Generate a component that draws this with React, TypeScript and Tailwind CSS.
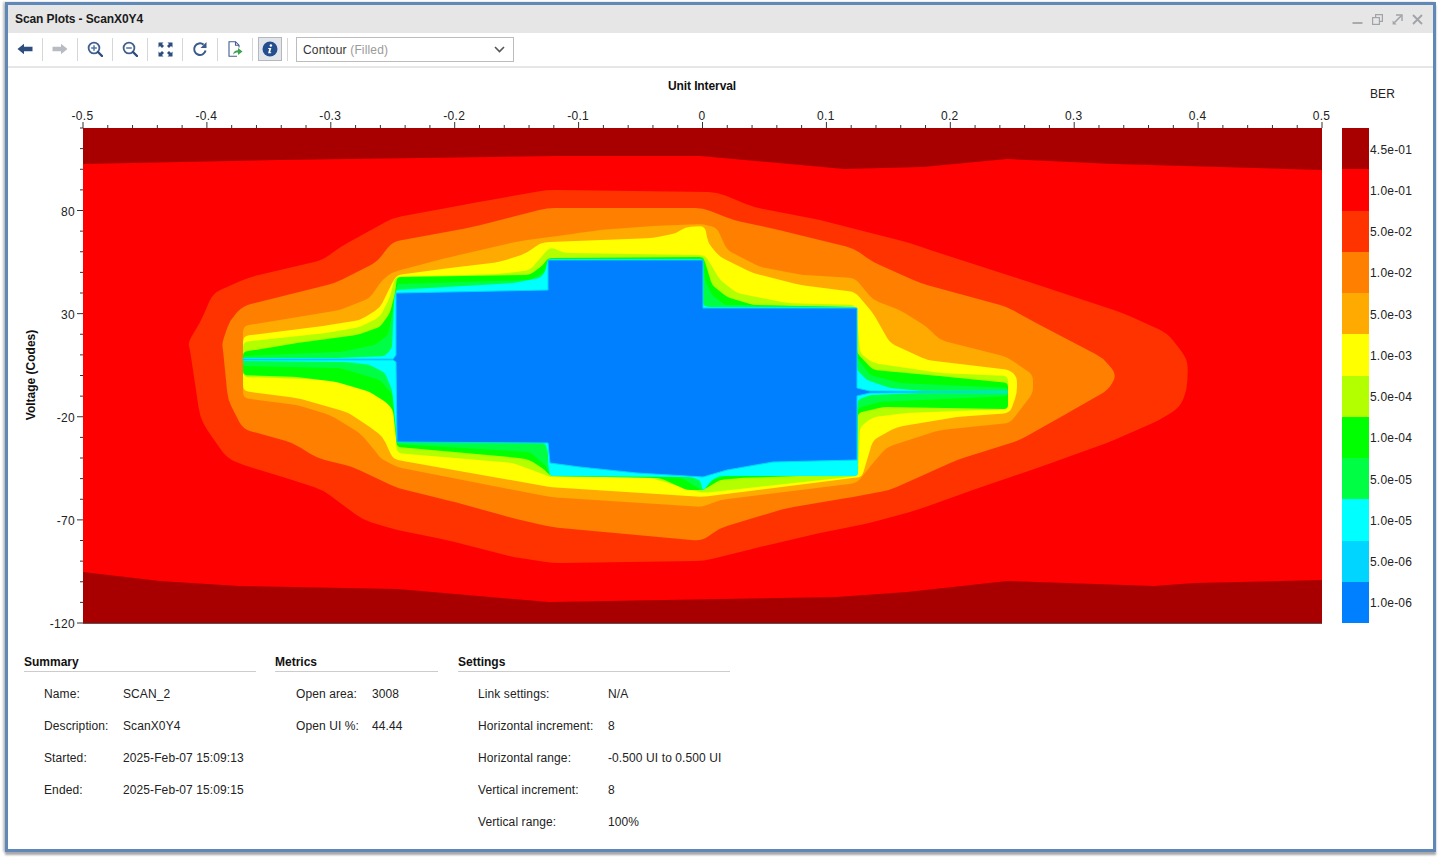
const layers = [
  {
    color: "#ff0000",
    radius: 0,
    points:
      "83,164 279,160 557,156 700,156 844,169 923,167 1007,159 1114,164 1322,170 1322,580 1194,583 1154,586 1007,581 907,592 836,597 549,602 398,589 239,586 160,581 83,572",
  },
  {
    color: "#ff3300",
    radius: 9,
    points:
      "188,342 200,323 213,293 250,277 323,260 340,247 393,218 473,203 547,190 717,192 753,207 820,220 910,243 930,250 1023,280 1123,313 1167,333 1183,353 1188,363 1187,390 1180,407 1160,420 1107,443 1040,467 973,490 917,510 870,523 820,533 760,547 704,561 553,563 513,557 447,540 397,530 363,520 323,490 283,477 243,465 227,458 207,430 200,417 190,350",
  },
  {
    color: "#ff8000",
    radius: 8,
    points:
      "222,343 230,320 243,306 335,283 377,262 392,242 473,227 547,208 703,208 733,220 770,228 853,248 873,262 920,283 1007,307 1040,325 1103,358 1117,375 1108,390 1073,410 1020,440 957,460 890,490 853,497 787,508 720,528 702,541 550,527 513,518 447,500 397,488 353,467 317,458 293,443 243,429 228,400 223,350",
  },
  {
    color: "#ffaa00",
    radius: 6,
    points:
      "243,326 340,310 370,298 382,280 393,272 450,257 520,241 550,237 580,233 600,230 653,226 703,224 717,228 727,250 760,267 803,275 855,278 873,300 900,310 927,327 940,340 1007,357 1033,375 1033,393 1010,423 940,430 887,447 873,463 857,483 720,500 702,507 550,497 397,467 380,458 377,453 360,433 330,415 297,405 243,398",
  },
  {
    color: "#ffff00",
    radius: 6,
    points:
      "243,336 323,326 360,320 380,308 392,283 397,275 450,268 500,262 527,253 540,243 550,242 653,238 677,233 685,227 705,226 708,243 720,257 753,273 800,285 855,292 873,313 890,343 927,360 1010,370 1017,377 1017,393 1010,413 957,417 897,427 873,440 862,477 853,478 702,497 550,487 397,460 392,457 383,437 370,427 347,412 297,398 243,391",
  },
  {
    color: "#b3ff00",
    radius: 5,
    points:
      "243,342 327,333 360,327 380,317 390,297 395,277 500,274 530,270 543,255 550,247 565,253 703,255 707,258 720,280 737,293 787,303 855,305 857,317 860,353 873,363 940,373 1008,376 1008,409 907,413 873,417 860,427 858,476 703,493 647,477 550,477 540,473 513,463 397,453 393,407 377,392 333,380 243,377",
  },
  {
    color: "#00ff00",
    radius: 4,
    points:
      "243,352 297,343 357,335 380,327 390,313 395,293 397,277 530,275 543,265 548,258 703,257 705,262 712,285 727,297 753,305 855,307 857,353 873,370 940,376 1008,383 1008,409 883,407 858,413 857,474 740,478 720,480 703,490 687,490 660,478 550,476 545,470 530,460 520,458 397,447 393,410 387,403 370,392 337,382 297,377 243,375",
  },
  {
    color: "#00ff44",
    radius: 3,
    points:
      "243,356 340,352 375,345 388,335 393,310 396,293 397,284 530,280 545,272 548,259 703,259 705,280 712,295 725,305 855,307 857,358 870,375 900,383 1008,388 1008,396 880,402 858,408 857,475 725,476 712,480 703,491 695,486 680,477 550,476 546,466 530,452 397,444 393,395 380,380 340,368 243,366",
  },
  {
    color: "#00ffff",
    radius: 3,
    points:
      "243,358 340,358 385,356 392,348 394,300 396,290 513,283 540,278 545,272 548,259 703,259 703,305 708,307 857,307 857,370 867,380 890,388 923,391 1008,391 1008,393 923,393 870,395 858,400 857,410 858,476 720,476 712,480 703,491 700,480 690,477 550,476 548,463 548,452 545,443 397,441 394,410 392,390 385,373 370,365 347,362 243,361",
  },
];

const bluePoints =
  "243,359 393,359 396,355 396,293 548,290 548,260 703,260 703,308 857,308 857,388 870,391 1008,392 870,393 857,396 857,460 773,462 727,470 703,477 637,473 580,467 550,463 548,443 397,442 396,362 393,360 243,360";

// polygon with its corners rounded, the contours of the plot are soft
function roundedPath(points: string, radius: number) {
  const pts = points.split(" ").map((p) => p.split(",").map(Number));
  if (radius === 0) return "M" + pts.map((p) => p.join(" ")).join("L") + "Z";
  let d = "";
  pts.forEach((p, i) => {
    const prev = pts[(i + pts.length - 1) % pts.length];
    const next = pts[(i + 1) % pts.length];
    const lenA = Math.hypot(prev[0] - p[0], prev[1] - p[1]);
    const lenB = Math.hypot(next[0] - p[0], next[1] - p[1]);
    const a = Math.min(radius, lenA / 2) / lenA;
    const b = Math.min(radius, lenB / 2) / lenB;
    const start = [p[0] + (prev[0] - p[0]) * a, p[1] + (prev[1] - p[1]) * a];
    const end = [p[0] + (next[0] - p[0]) * b, p[1] + (next[1] - p[1]) * b];
    d += `${i === 0 ? "M" : "L"}${start[0]} ${start[1]}Q${p[0]} ${p[1]} ${end[0]} ${end[1]}`;
  });
  return d + "Z";
}

const legend = [
  { color: "#a80000", label: "4.5e-01" },
  { color: "#ff0000", label: "1.0e-01" },
  { color: "#ff3300", label: "5.0e-02" },
  { color: "#ff8000", label: "1.0e-02" },
  { color: "#ffaa00", label: "5.0e-03" },
  { color: "#ffff00", label: "1.0e-03" },
  { color: "#b3ff00", label: "5.0e-04" },
  { color: "#00ff00", label: "1.0e-04" },
  { color: "#00ff44", label: "5.0e-05" },
  { color: "#00ffff", label: "1.0e-05" },
  { color: "#00d5ff", label: "5.0e-06" },
  { color: "#0080ff", label: "1.0e-06" },
];

const xLabels = ["-0.5", "-0.4", "-0.3", "-0.2", "-0.1", "0", "0.1", "0.2", "0.3", "0.4", "0.5"];
const yLabels = ["80", "30", "-20", "-70", "-120"];

const sections = [
  {
    title: "Summary",
    box: "w-[232px]",
    rowPad: "pl-[20px]",
    labelWidth: "w-[79px]",
    rows: [
      ["Name:", "SCAN_2"],
      ["Description:", "ScanX0Y4"],
      ["Started:", "2025-Feb-07 15:09:13"],
      ["Ended:", "2025-Feb-07 15:09:15"],
    ],
  },
  {
    title: "Metrics",
    box: "w-[163px]",
    rowPad: "pl-[21px]",
    labelWidth: "w-[76px]",
    rows: [
      ["Open area:", "3008"],
      ["Open UI %:", "44.44"],
    ],
  },
  {
    title: "Settings",
    box: "ml-[1px] w-[272px]",
    rowPad: "pl-[20px]",
    labelWidth: "w-[130px]",
    rows: [
      ["Link settings:", "N/A"],
      ["Horizontal increment:", "8"],
      ["Horizontal range:", "-0.500 UI to 0.500 UI"],
      ["Vertical increment:", "8"],
      ["Vertical range:", "100%"],
    ],
  },
];

function ContourChart() {
  const xTicks = Array.from({ length: 51 }, (_, i) => i);
  const yTicks = Array.from({ length: 25 }, (_, i) => i);
  return (
    <svg width="1322" height="572" viewBox="8 68 1322 572" className="shrink-0">
      <text x="702" y="90" textAnchor="middle" fontSize="12" fontWeight="700" letterSpacing="-0.1" fill="#111">
        Unit Interval
      </text>
      <text
        x="0"
        y="0"
        transform="translate(35 375) rotate(-90)"
        textAnchor="middle"
        fontSize="12"
        fontWeight="700"
        fill="#111"
      >
        Voltage (Codes)
      </text>

      <rect x="83" y="128" width="1239" height="495" fill="#a80000" />
      {layers.map((layer) => (
        <path key={layer.color} d={roundedPath(layer.points, layer.radius)} fill={layer.color} />
      ))}
      <polygon points={bluePoints} fill="#0080ff" stroke="#00d5ff" strokeWidth="1" />

      {xTicks.map((i) => {
        const x = 83 + i * 24.78;
        return (
          <line key={i} x1={x} x2={x} y1={i % 5 === 0 ? 122 : 125} y2="128" stroke="#333" strokeWidth="1" />
        );
      })}
      {yTicks.map((i) => {
        const y = 623 - i * 20.625;
        return (
          <line key={i} x1={i % 5 === 0 ? 77 : 80} x2="83" y1={y} y2={y} stroke="#333" strokeWidth="1" />
        );
      })}
      <line x1="83" x2="1322" y1="623.5" y2="623.5" stroke="#555" strokeWidth="1" />

      {xLabels.map((label, i) => (
        <text
          key={label}
          x={82.5 + i * 123.9}
          y="120"
          textAnchor="middle"
          fontSize="12"
          letterSpacing="0.3"
          fill="#222"
        >
          {label}
        </text>
      ))}
      {yLabels.map((label, i) => (
        <text key={label} x="75" y={216 + i * 103} textAnchor="end" fontSize="12" letterSpacing="0.3" fill="#222">
          {label}
        </text>
      ))}
    </svg>
  );
}

function Separator() {
  return <div className="h-[23px] w-px shrink-0 bg-[#d6d6d6]" />;
}

function ToolButton({ children }: { children: React.ReactNode }) {
  return <div className="flex h-[24px] w-[34px] shrink-0 items-center justify-center">{children}</div>;
}

function MagnifierIcon({ minus }: { minus?: boolean }) {
  return (
    <svg width="16" height="16" viewBox="0 0 16 16" fill="none">
      <circle cx="7" cy="7" r="5.4" stroke="#3f5f8f" strokeWidth="1.8" />
      <path d="M11 11l4 4" stroke="#2e4d7f" strokeWidth="2.4" strokeLinecap="round" />
      <path d="M4.2 7h5.6" stroke="#5a7aa6" strokeWidth="1.6" />
      {!minus && <path d="M7 4.2v5.6" stroke="#5a7aa6" strokeWidth="1.6" />}
    </svg>
  );
}

export default function App() {
  return (
    <div className="h-[860px] w-[1440px] overflow-hidden bg-white pl-[5px] pt-[2px] font-['Liberation_Sans',Arial,sans-serif] text-[12px] text-[#222]">
      <div className="flex h-[850px] w-[1431px] flex-col border-[3px] border-[#5f87b8] bg-white shadow-[0_3px_2px_#a8a8a8,-2px_0_2px_#c8c8c8]">
        {/* title bar */}
        <div className="flex h-[28px] shrink-0 items-center justify-between bg-[#e6e6e6] pl-[7px] pr-[10px]">
          <span className="text-[12px] font-bold tracking-[-0.1px] text-[#1a1a1a]">Scan Plots - ScanX0Y4</span>
          <div className="flex items-center gap-[9px]">
            <svg width="11" height="11" viewBox="0 0 11 11" fill="none">
              <path d="M0.5 9h10" stroke="#a0a4a8" strokeWidth="1.8" />
            </svg>
            <svg width="11" height="11" viewBox="0 0 11 11" fill="none" stroke="#a0a4a8" strokeWidth="1.2">
              <rect x="0.6" y="3.6" width="6.8" height="6.8" />
              <path d="M3.6 3.4V0.6h6.8v6.8H7.6" />
            </svg>
            <svg width="11" height="11" viewBox="0 0 11 11" fill="none">
              <path d="M4 1h6v6" stroke="#a0a4a8" strokeWidth="1.4" />
              <path d="M0.6 10.4V6.4L4.6 10.4Z" fill="#a0a4a8" />
              <path d="M2.5 8.5L9.8 1.2" stroke="#a0a4a8" strokeWidth="1.6" />
            </svg>
            <svg width="11" height="11" viewBox="0 0 11 11" fill="none">
              <path d="M1 1l9 9M10 1l-9 9" stroke="#a0a4a8" strokeWidth="1.8" />
            </svg>
          </div>
        </div>

        {/* toolbar */}
        <div className="flex h-[35px] shrink-0 items-center border-b-2 border-[#e6e6e6] pb-[1px]">
          <ToolButton>
            <svg width="16" height="12" viewBox="0 0 16 12">
              <path d="M0.5 6L7 0.8V3.8H15.5V8.2H7V11.2Z" fill="#2e4d7f" />
            </svg>
          </ToolButton>
          <Separator />
          <ToolButton>
            <svg width="16" height="12" viewBox="0 0 16 12">
              <path d="M15.5 6L9 0.8V3.8H0.5V8.2H9V11.2Z" fill="#b8bcc2" />
            </svg>
          </ToolButton>
          <Separator />
          <ToolButton>
            <MagnifierIcon />
          </ToolButton>
          <Separator />
          <ToolButton>
            <MagnifierIcon minus />
          </ToolButton>
          <Separator />
          <ToolButton>
            <svg width="15" height="15" viewBox="0 0 15 15" fill="#2e4d7f">
              <path d="M0.5 0.5H5.5L4 2L6 4L4 6L2 4L0.5 5.5Z" />
              <path d="M14.5 0.5H9.5L11 2L9 4L11 6L13 4L14.5 5.5Z" />
              <path d="M0.5 14.5H5.5L4 13L6 11L4 9L2 11L0.5 9.5Z" />
              <path d="M14.5 14.5H9.5L11 13L9 11L11 9L13 11L14.5 9.5Z" />
            </svg>
          </ToolButton>
          <Separator />
          <ToolButton>
            <svg width="16" height="16" viewBox="0 0 16 16" fill="none">
              <path d="M13.6 9.5A5.8 5.8 0 1 1 11.6 3.6" stroke="#3a5a8c" strokeWidth="2" />
              <path d="M14.5 1V7H8.5Z" fill="#3a5a8c" />
            </svg>
          </ToolButton>
          <Separator />
          <ToolButton>
            <svg width="16" height="16" viewBox="0 0 16 16" fill="none">
              <path d="M12 6.5V4.2L8.5 0.7H2V15.3H10" stroke="#3f5f8f" strokeWidth="1.1" />
              <path d="M8.5 0.7V4.2H12" stroke="#3f5f8f" strokeWidth="1.1" />
              <path d="M6 13.5C6.5 10.5 8.5 9.2 11 9.2V7L15.5 10.5L11 14V11.6C9 11.6 7.5 12.2 6 13.5Z" fill="#3ea24f" />
            </svg>
          </ToolButton>
          <Separator />
          <ToolButton>
            <div className="flex h-[24px] w-[24px] items-center justify-center border border-[#b4b8be] bg-[#e2e5ea]">
              <svg width="16" height="16" viewBox="0 0 16 16">
                <circle cx="8" cy="8" r="7.5" fill="#234f8e" />
                <circle cx="8.9" cy="4.4" r="1.25" fill="#fff" />
                <path d="M6.4 7.1H9.3L8.2 11.2H9.3L9 12.2H6.1L7.2 8.1H6.1Z" fill="#fff" />
              </svg>
            </div>
          </ToolButton>
          <Separator />
          <div className="ml-[8px] flex h-[25px] w-[218px] items-center justify-between border border-[#bcbcbc] bg-white pl-[6px] pr-[8px]">
            <span className="pt-[1px] tracking-[0.15px] text-[#333]">
              Contour <span className="text-[#9a9a9a]">(Filled)</span>
            </span>
            <svg width="11" height="7" viewBox="0 0 11 7" fill="none">
              <path d="M1 1l4.5 4.5L10 1" stroke="#555" strokeWidth="1.6" />
            </svg>
          </div>
        </div>

        {/* chart and legend */}
        <div className="flex h-[572px] shrink-0">
          <ContourChart />
          <div className="ml-[12px] flex flex-col">
            <div className="ml-[28px] mt-[17px] h-[43px] tracking-[0.1px] text-[#222]">BER</div>
            {legend.map((item) => (
              <div key={item.label} className="flex h-[41.25px] items-center">
                <div className="h-full w-[27px]" style={{ backgroundColor: item.color }} />
                <span className="ml-[1px] pt-[2px] tracking-[0.2px] text-[#222]">{item.label}</span>
              </div>
            ))}
          </div>
        </div>

        {/* scan details */}
        <div className="mt-[15px] flex gap-[19px] pl-[16px]">
          {sections.map((section) => (
            <div key={section.title} className={section.box}>
              <div className="h-[17px] border-b border-[#cccccc] font-bold leading-[15px] text-[#111]">
                {section.title}
              </div>
              <div className="pt-[6px]">
                {section.rows.map(([label, value]) => (
                  <div key={label} className={`flex h-[32px] items-center tracking-[0.1px] ${section.rowPad}`}>
                    <span className={section.labelWidth}>{label}</span>
                    <span>{value}</span>
                  </div>
                ))}
              </div>
            </div>
          ))}
        </div>
      </div>
    </div>
  );
}
